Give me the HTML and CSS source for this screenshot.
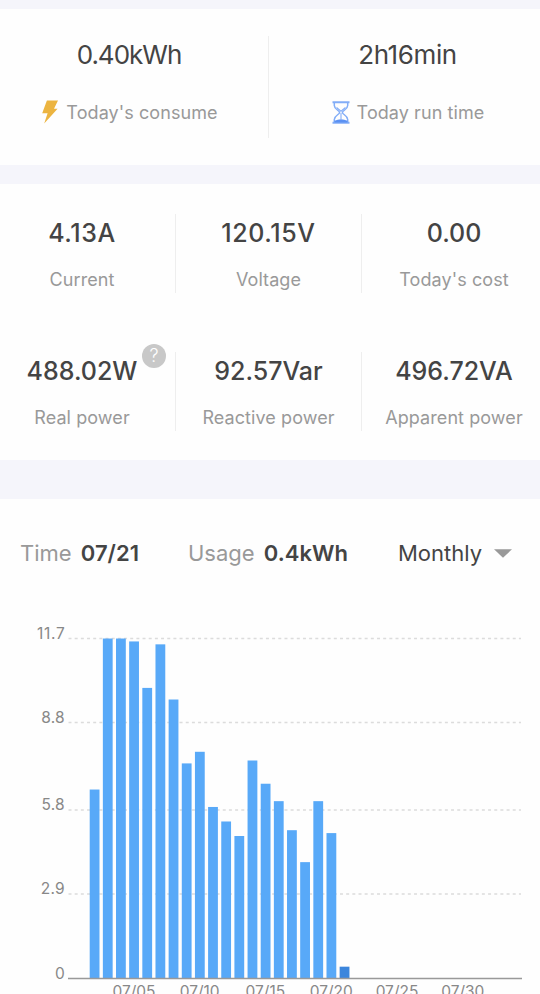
FILE: index.html
```html
<!DOCTYPE html>
<html lang="en">
<head>
<meta charset="utf-8">
<title>Energy</title>
<link rel="stylesheet" href="styles.css">
</head>
<body>
<section class="today">
  <div class="today-item">
    <div class="today-value consumed">0.40kWh</div>
    <div class="today-label">
      <svg width="18" height="24" viewBox="0 0 18 24"><path d="M5.9.4H17L13 8.8H16.6L3.2 23.5 6.6 13.3H1.2Z" fill="#ecb440"/></svg>
      <span>Today's consume</span>
    </div>
  </div>
  <div class="today-item">
    <div class="today-value">2h16min</div>
    <div class="today-label">
      <svg width="18" height="23" viewBox="0 0 18 23" fill="none" stroke="#82adf7" stroke-width="1.5"><path d="M.5 1.2H17.5M.5 21.8H17.5" stroke-width="1.9"/><path d="M2.3 1.5V4.5C2.3 8.5 7.6 9.5 7.6 11.5S2.3 14.5 2.3 18.5V21.5M15.7 1.5V4.5C15.7 8.5 10.4 9.5 10.4 11.5S15.7 14.5 15.7 18.5V21.5"/><path d="M4.5 6.5 9 10.2 13.5 6.5M9 12V18" stroke-width="1.1"/><path d="M2.5 21.5V19.8Q9 16.8 15.5 19.8V21.5Z" fill="#5b91f3" stroke="none"/></svg>
      <span>Today run time</span>
    </div>
  </div>
</section>

<section class="metrics">
  <div class="metric"><div class="value loose">4.13A</div><div class="label">Current</div></div>
  <div class="metric"><div class="value loose">120.15V</div><div class="label">Voltage</div></div>
  <div class="metric"><div class="value">0.00</div><div class="label">Today's cost</div></div>
  <div class="metric"><div class="value">488.02W<i class="help">?</i></div><div class="label">Real power</div></div>
  <div class="metric"><div class="value">92.57Var</div><div class="label">Reactive power</div></div>
  <div class="metric"><div class="value">496.72VA</div><div class="label">Apparent power</div></div>
</section>

<section class="usage">
  <header class="summary">
    <div class="time">Time <b>07/21</b></div>
    <div class="used">Usage <b>0.4kWh</b></div>
    <div class="period"><span>Monthly</span><svg width="18" height="9" viewBox="0 0 18 9"><path d="M0 .3H18L9 8.7Z" fill="#999"/></svg></div>
  </header>
  <svg class="chart" width="540" height="394" viewBox="0 600 540 394">
    <g class="grid"><path d="M68.5 638.5H521M68.5 722.5H521M68.5 810H521M68.5 894H521"/></g>
    <g class="y-axis">
      <text class="loose" x="65.5" y="638.8">11.7</text>
      <text x="65" y="723.1">8.8</text>
      <text x="65" y="810.4">5.8</text>
      <text x="65" y="894.4">2.9</text>
      <text x="65" y="978.7">0</text>
    </g>
    <g id="bars"></g>
    <path class="baseline" d="M68 978.5H522"/>
    <g class="x-axis">
      <text x="134" y="997.2">07/05</text>
      <text x="199.7" y="997.2">07/10</text>
      <text x="265.4" y="997.2">07/15</text>
      <text x="331.3" y="997.2">07/20</text>
      <text x="397" y="997.2">07/25</text>
      <text x="462.8" y="997.2">07/30</text>
    </g>
  </svg>
</section>
<script src="chart.js"></script>
</body>
</html>
```
FILE: styles.css
```css
* { box-sizing: border-box; }
body { margin: 0; padding-top: 9px; height: 994px; overflow: hidden; background: #f5f5fb; color: #444; font-family: Inter, "Liberation Sans", sans-serif; }
section { background: #fefefe; }

.today { height: 156px; margin-bottom: 19px; padding-top: 27px; display: grid; grid-template-columns: 269px 271px; }
.today-item { height: 102px; text-align: center; }
.today-item:first-child { border-right: 1px solid #eee; padding-right: 9px; }
.today-item:last-child { padding-left: 6px; }
.today-value { font-size: 26px; line-height: 37px; letter-spacing: -0.4px; }
.today-value.consumed { letter-spacing: -1px; padding-right: 1px; }
.today-label { display: flex; justify-content: center; align-items: center; margin-top: 26px; height: 26px; gap: 7px; color: #999; font-size: 18px; letter-spacing: 0.08px; }
.today-item:last-child .today-label { padding-left: 1px; }

.metrics { height: 276px; margin-bottom: 39px; padding-top: 30px; display: grid; grid-template-columns: 176px 186px 178px; grid-auto-rows: 79px; row-gap: 59px; text-align: center; }
.metric { border-right: 1px solid #eee; white-space: nowrap; }
.metric:nth-child(3n) { border-right: 0; padding-left: 6px; }
.metric:nth-child(3n+1) { padding-right: 11px; }
.value { position: relative; font-size: 25px; font-weight: 500; line-height: 38px; }
.value.loose { letter-spacing: 0.6px; }
.label { margin-top: 15px; font-size: 18px; line-height: 26px; color: #999; letter-spacing: 0.08px; }
.help { position: absolute; left: 142px; top: -8px; width: 24px; height: 24px; border-radius: 50%; background: #c8c8c8; color: #fff; font-size: 18px; font-style: normal; font-weight: 300; line-height: 24px; }

.usage { height: 495px; }
.summary { display: flex; align-items: center; height: 108px; padding-left: 20px; font-size: 22px; color: #999; white-space: nowrap; }
.summary b { font-weight: 600; color: #444; margin-left: 3px; }
.time { width: 168px; }
.used { width: 210px; }
.period { display: flex; align-items: center; width: 114px; justify-content: space-between; color: #444; }

.chart { display: block; margin-top: -7px; }
.grid path { fill: none; stroke: #dcdcdc; stroke-width: 1.3; stroke-dasharray: 3 3.17; }
.baseline { stroke: #999; stroke-width: 1.5; }
.bar { fill: #58a9f8; }
.bar.selected { fill: #3c86dc; }
.chart text { font-size: 15.5px; fill: #888; }
.y-axis { text-anchor: end; letter-spacing: 0.3px; }
.y-axis .loose { letter-spacing: 0.7px; }
.x-axis { text-anchor: middle; }
```
FILE: chart.js
```js
const readings = [6.5, 11.7, 11.7, 11.6, 10, 11.5, 9.6, 7.4, 7.8, 5.9, 5.4, 4.9, 7.5, 6.7, 6.1, 5.1, 4, 6.1, 5, 0.4];
const baseline = 978.3;
const unit = 29.04;
const pitch = 13.155;
const bars = document.getElementById("bars");

readings.forEach((value, i) => {
  const bar = document.createElementNS("http://www.w3.org/2000/svg", "rect");
  bar.setAttribute("class", i === readings.length - 1 ? "bar selected" : "bar");
  bar.setAttribute("x", 89.7 + i * pitch);
  bar.setAttribute("y", baseline - value * unit);
  bar.setAttribute("width", 9.8);
  bar.setAttribute("height", value * unit);
  bars.appendChild(bar);
});
```
